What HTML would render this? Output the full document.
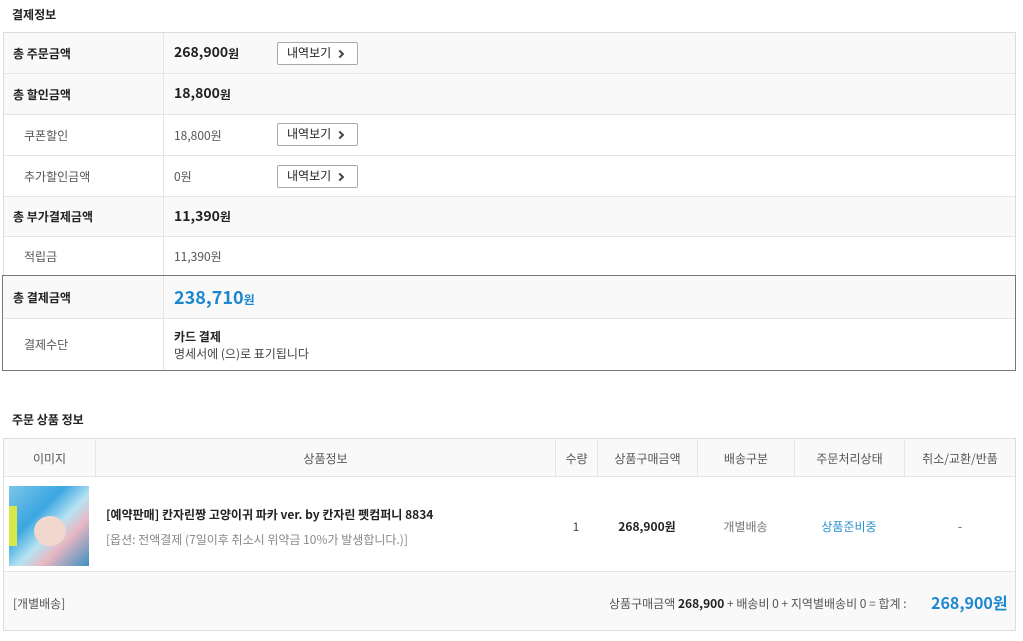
<!DOCTYPE html>
<html><head><meta charset="utf-8"><style>
*{margin:0;padding:0;box-sizing:border-box}
body{width:1023px;height:641px;background:#fff;font-family:"Noto Sans CJK KR","Liberation Sans",sans-serif;color:#333;font-size:12px;line-height:1.25;position:relative;overflow:hidden}
.a{position:absolute}
.t{font-weight:bold;font-size:12px;color:#222}
.row{position:absolute;left:4px;width:1011px;border-bottom:1px solid #e5e5e5}
.g{background:#f9f9f9}
.lab{position:absolute;left:0;top:0;bottom:0;width:160px;border-right:1px solid #e5e5e5;display:flex;align-items:center;padding-left:9px}
.sub{padding-left:20px;color:#555}
.val{position:absolute;left:170px;top:0;bottom:0;display:flex;align-items:center}
.big{font-weight:bold;font-size:14px;color:#222}
.big small{font-size:12px}
.btn{position:absolute;left:273px;width:81px;height:23px;border:1px solid #aaa;border-radius:2px;background:#fff;font-size:12px;color:#222;padding-left:9px;line-height:20px}
.btn:after{content:"";position:absolute;right:14px;top:8px;width:4px;height:4px;border-right:2px solid #444;border-top:2px solid #444;transform:rotate(45deg)}
.th{position:absolute;top:0;height:38px;border-right:1px solid #e5e5e5;display:flex;align-items:center;justify-content:center;color:#555}
.td{position:absolute;display:flex;align-items:center;justify-content:center}
</style></head><body>
<div class="a t" style="left:12px;top:7px">결제정보</div>
<div class="a" style="left:3px;top:32px;width:1013px;height:244px;border:1px solid #ddd;border-bottom:none"></div>

<div class="row g" style="top:33px;height:41px"><div class="lab t">총 주문금액</div><div class="val big">268,900<small>원</small></div><div class="btn" style="top:9px">내역보기</div></div>
<div class="row g" style="top:74px;height:41px"><div class="lab t">총 할인금액</div><div class="val big">18,800<small>원</small></div></div>
<div class="row" style="top:115px;height:41px"><div class="lab sub">쿠폰할인</div><div class="val" style="color:#555">18,800원</div><div class="btn" style="top:8px">내역보기</div></div>
<div class="row" style="top:156px;height:41px"><div class="lab sub">추가할인금액</div><div class="val" style="color:#555">0원</div><div class="btn" style="top:9px">내역보기</div></div>
<div class="row g" style="top:197px;height:40px"><div class="lab t">총 부가결제금액</div><div class="val big">11,390<small>원</small></div></div>
<div class="row" style="top:237px;height:39px;border-bottom:none"><div class="lab sub">적립금</div><div class="val" style="color:#555">11,390원</div></div>

<div class="a" style="left:2px;top:275px;width:1014px;height:96px;border:1px solid #777"></div>
<div class="row g" style="top:276px;left:3px;width:1012px;height:43px"><div class="lab t" style="width:161px;padding-left:10px">총 결제금액</div><div class="val" style="left:171px;font-weight:bold;font-size:18px;color:#1c87cf">238,710<small style="font-size:12px;margin-top:4px">원</small></div></div>
<div class="row" style="top:319px;left:3px;width:1012px;height:51px;border-bottom:none"><div class="lab sub" style="width:161px;padding-left:21px">결제수단</div><div class="val" style="left:171px;flex-direction:column;align-items:flex-start;justify-content:center;line-height:17px"><b style="color:#222">카드 결제</b><span style="color:#444">명세서에 (으)로 표기됩니다</span></div></div>

<div class="a t" style="left:12px;top:412px">주문 상품 정보</div>
<div class="a" style="left:3px;top:438px;width:1013px;height:193px;border:1px solid #ddd"></div>
<div class="a g" style="left:4px;top:439px;width:1011px;height:38px;border-bottom:1px solid #e5e5e5">
<div class="th" style="left:0;width:92px">이미지</div>
<div class="th" style="left:92px;width:460px">상품정보</div>
<div class="th" style="left:552px;width:42px">수량</div>
<div class="th" style="left:594px;width:100px">상품구매금액</div>
<div class="th" style="left:694px;width:97px">배송구분</div>
<div class="th" style="left:791px;width:110px">주문처리상태</div>
<div class="th" style="left:901px;width:110px;border:none">취소/교환/반품</div>
</div>
<div class="a" style="left:9px;top:486px;width:80px;height:80px;background:linear-gradient(135deg,#7cc6e8 0%,#3aa6e0 35%,#b7e3f2 55%,#e8b7c2 70%,#3d8fc0 100%)">
<div class="a" style="left:0;top:20px;width:8px;height:40px;background:#d8e84a"></div>
<div class="a" style="left:25px;top:30px;width:32px;height:30px;border-radius:50%;background:#f2d7cf"></div>
</div>
<div class="a" style="left:106px;top:507px;font-weight:bold;color:#222;font-size:12px">[예약판매] 칸자린짱 고양이귀 파카 ver. by 칸자린 펫컴퍼니 8834</div>
<div class="a" style="left:106px;top:532px;color:#888;font-size:12px">[옵션: 전액결제 (7일이후 취소시 위약금 10%가 발생합니다.)]</div>
<div class="td" style="left:556px;width:40px;top:519px;color:#444">1</div>
<div class="td" style="left:597px;width:100px;top:519px;font-weight:bold;color:#222">268,900원</div>
<div class="td" style="left:697px;width:97px;top:519px;color:#777">개별배송</div>
<div class="td" style="left:794px;width:110px;top:519px;color:#2a8fd0">상품준비중</div>
<div class="td" style="left:904px;width:112px;top:519px;color:#555">-</div>
<div class="a g" style="left:4px;top:571px;width:1011px;height:59px;border-top:1px solid #e5e5e5">
<div class="a" style="left:9px;top:24px;color:#555">[개별배송]</div>
<div class="a" style="left:605px;top:24px;color:#555">상품구매금액 <b style="color:#222">268,900</b> + 배송비 0 + 지역별배송비 0 = 합계 :</div>
<div class="a" style="left:927px;top:20px;font-weight:bold;font-size:16px;color:#1c87cf">268,900원</div>
</div>
</body></html>
